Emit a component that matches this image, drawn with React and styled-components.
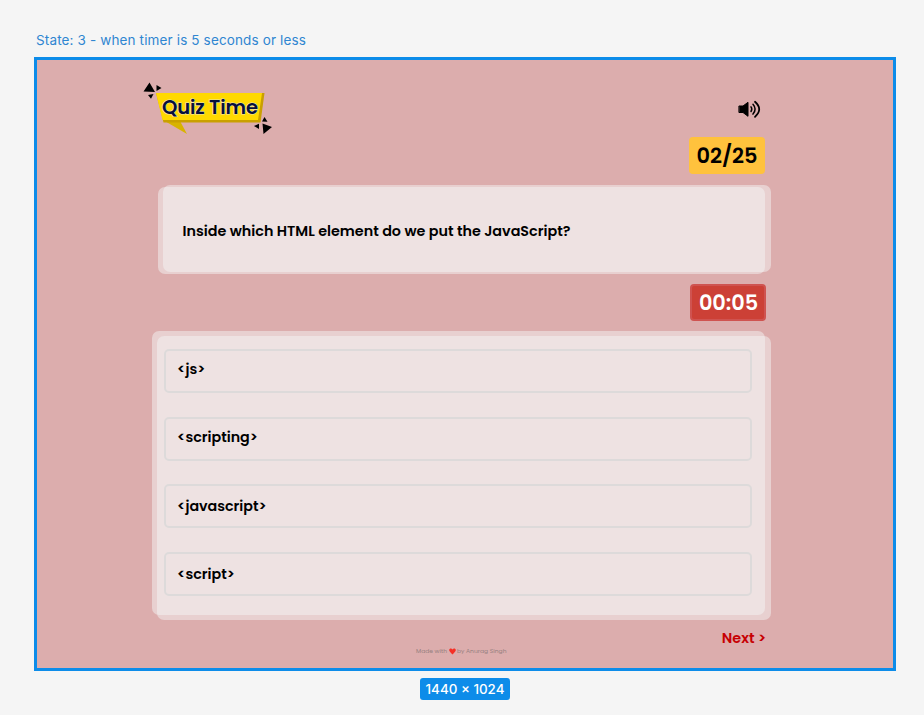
import React from "react";
import styled, { createGlobalStyle } from "styled-components";

const Global = createGlobalStyle`
  *, *::before, *::after { box-sizing: border-box; }
  body { margin: 0; background: #f5f5f5; }
`;

const Canvas = styled.main`
  display: flex;
  flex-direction: column;
  align-items: flex-start;
  width: 924px;
  height: 715px;
  padding: 31px 0 0 34px;
  background: #f5f5f5;
  font-family: Poppins, Inter, sans-serif;
`;

const FrameLabel = styled.div`
  height: 26px;
  padding-left: 2px;
  color: #2f86d1;
  font: 400 13.5px/19px Inter, sans-serif;
  letter-spacing: 0.14px;
  white-space: nowrap;
`;

const Frame = styled.section`
  display: flex;
  flex-direction: column;
  width: 862px;
  height: 614px;
  padding: 21px 0 0 106px;
  border: 3px solid #0d8ce9;
  background: #dcadad;
`;

const Header = styled.header`
  display: flex;
  justify-content: space-between;
  width: 619px;
  height: 56px;
`;

const SoundButton = styled.button`
  display: block;
  width: 24px;
  height: 22px;
  margin-top: 17px;
  padding: 0;
  border: 0;
  background: none;
`;

const Chip = styled.div`
  display: flex;
  align-items: center;
  justify-content: center;
  width: 76px;
  height: 37px;
  margin-left: 546px;
  border-radius: 4px;
  border: ${(p) => (p.$alert ? "2px solid #cf5350" : "0")};
  background: ${(p) => (p.$alert ? "#cc4036" : "#ffc23d")};
  color: ${(p) => (p.$alert ? "#fff" : "#000")};
  padding-left: ${(p) => (p.$alert ? 2 : 0)}px;
  font-weight: 600;
  font-size: 20.9px;
  line-height: 30px;
`;

const Stack = styled.div`
  display: grid;
  width: ${(p) => p.$width}px;
  height: ${(p) => p.$height}px;
  margin: ${(p) => p.$margin};
  & > * { grid-area: 1 / 1; }
`;

const Sheet = styled.div`
  margin: ${(p) => p.$inset};
  border-radius: 7px;
  background: rgba(243, 243, 243, 0.5);
`;

const Question = styled.h1`
  align-self: center;
  margin: 0 0 0 25px;
  padding-top: 4px;
  font-size: 14.33px;
  line-height: 22px;
  font-weight: 600;
  white-space: nowrap;
`;

const Options = styled.div`
  display: flex;
  flex-direction: column;
  gap: 23.7px;
  padding: 18px 0 0 12px;
`;

const Option = styled.div`
  width: 588px;
  height: 44px;
  padding: ${(p) => p.$top}px 0 0 11.6px;
  border: 2px solid #dddada;
  border-radius: 5px;
  font-size: 14.25px;
  line-height: 22px;
  font-weight: 600;
`;

const Footer = styled.footer`
  display: grid;
  grid-template-columns: 273px 1fr auto;
  width: 623px;
  height: 38px;
`;

const Credit = styled.div`
  grid-column: 2;
  display: flex;
  align-items: center;
  gap: 1.5px;
  height: 8px;
  margin-top: 27px;
  color: #95807f;
  font-size: 6px;
  line-height: 8px;
`;

const Next = styled.button`
  height: 22px;
  margin-top: 7px;
  padding: 0;
  border: 0;
  background: none;
  color: #c70003;
  font: 600 14.33px/22px Poppins, Inter, sans-serif;
`;

const SizeBadge = styled.div`
  align-self: flex-start;
  display: flex;
  align-items: center;
  justify-content: center;
  width: 90px;
  height: 22px;
  margin: 7px 0 0 386px;
  border-radius: 3px;
  background: #0d8ce9;
  color: #fff;
  font: 500 13.4px/22px Inter, sans-serif;
  white-space: nowrap;
`;

const Logo = () => (
  <svg width="130" height="54" viewBox="143 81 130 54" role="img" aria-label="Quiz Time">
    <path d="M163 120 L187 134 L180 121Z" fill="#d8b300" />
    <path d="M156 93 L264.5 93 L260.5 122.5 L163.5 122.5Z" fill="#c9a000" />
    <path d="M156 93 L262 93 L258 120 L162.5 120Z" fill="#ffd900" />
    <path d="M149.5 82.5 L155 92 L143.5 91.5Z M156.5 85 L161.5 88 L156.5 91Z M148 95 L153.5 94 L151 98.8Z" />
    <path d="M264.5 117 L267.5 121.8 L262 121.5Z M262.5 123.5 L272 127 L263.5 134Z M254 126 L259 123.8 L259 129Z" />
    <text x="162" y="114.3" textLength="96" lengthAdjust="spacing" fill="#07103c" stroke="#efe5b0" strokeWidth="1.2" paintOrder="stroke" fontFamily="Poppins, Inter, sans-serif" fontSize="19.6" fontWeight="600">Quiz Time</text>
  </svg>
);

const Speaker = () => (
  <svg width="24" height="22" viewBox="738 98 24 22" fill="none" stroke="#000" strokeLinecap="round">
    <path d="M739.3 106 H743 L748 102.3 V116.3 L743 112.5 H739.3Z" fill="#000" strokeLinejoin="round" />
    <path d="M751 106.9 Q752.6 109.2 751 111.5 M753 104.3 Q757.2 109.2 753 114.1" strokeWidth="1.5" />
    <path d="M755 101.8 Q763.4 109.2 755 116.8" strokeWidth="1.8" />
  </svg>
);

const Heart = () => (
  <svg width="7" height="7" viewBox="0 0 12 12">
    <path d="M6 11 C3 8 .3 6 .3 3.5 C.3.6 4.4-.2 6 2.4 C7.6-.2 11.7.6 11.7 3.5 C11.7 6 9 8 6 11Z" fill="#f53026" />
  </svg>
);

const options = [
  { text: "<js>", top: 7 },
  { text: "<scripting>", top: 7.8 },
  { text: "<javascript>", top: 8.2 },
  { text: "<script>", top: 8.5 },
];

export default function App() {
  return (
    <Canvas>
      <Global />
      <FrameLabel>State: 3 - when timer is 5 seconds or less</FrameLabel>
      <Frame>
        <Header>
          <Logo />
          <SoundButton aria-label="Sound"><Speaker /></SoundButton>
        </Header>
        <Chip>02/25</Chip>
        <Stack $width={613.5} $height={90} $margin="10px 0 0 14.5px">
          <Sheet $inset="3px 6.1px 0 0" />
          <Sheet $inset="0.5px 0 2px 5px" />
          <Question>Inside which HTML element do we put the JavaScript?</Question>
        </Stack>
        <Stack $width={628} $height={37} $margin="10px 0 10px 0.6px">
          <Chip $alert>00:05</Chip>
        </Stack>
        <Stack $width={619.5} $height={289} $margin="0 0 0 8.5px">
          <Sheet $inset="0 5.6px 5.4px 0" />
          <Sheet $inset="5.4px 0 0.4px 5.9px" />
          <Options>
            {options.map((o) => (
              <Option key={o.text} $top={o.top}>{o.text}</Option>
            ))}
          </Options>
        </Stack>
        <Footer>
          <Credit>Made with <Heart /> by Anurag Singh</Credit>
          <Next>Next &gt;</Next>
        </Footer>
      </Frame>
      <SizeBadge>1440 × 1024</SizeBadge>
    </Canvas>
  );
}
